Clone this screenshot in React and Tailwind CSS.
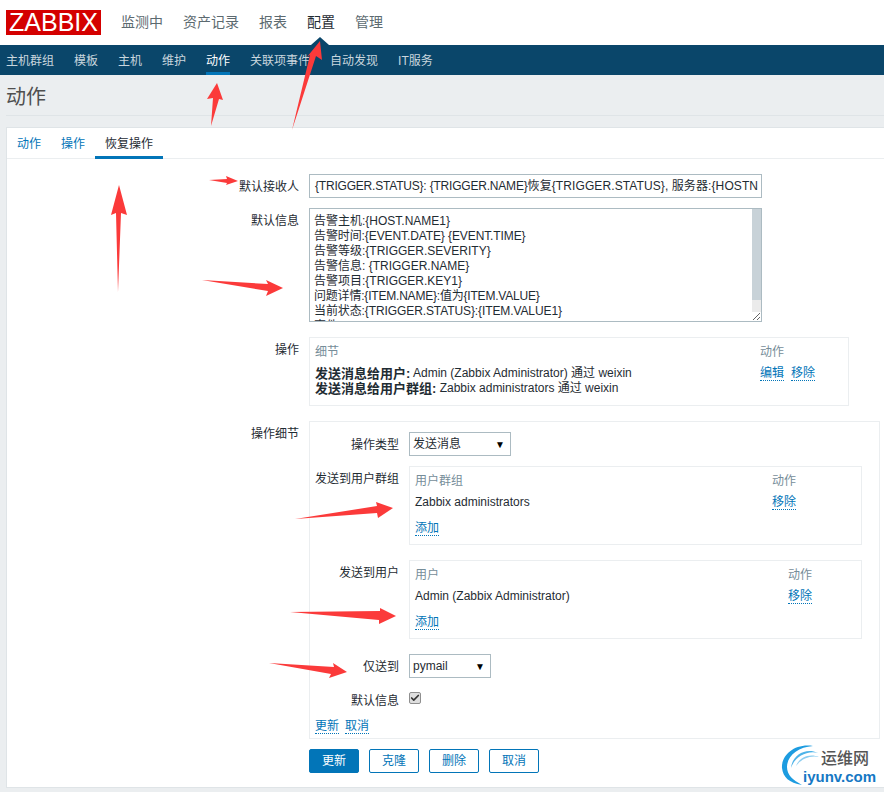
import { Check } from "lucide-react"

function Link({ children }) {
  return <a className="text-[#0275b8] border-b border-dotted border-[#0275b8] leading-[14px]">{children}</a>
}

function Row({ label, children, className = "" }) {
  return (
    <div className={`flex gap-[10px] ${className}`}>
      <div className="w-[292px] text-right pt-[6px] leading-[14px]">{label}</div>
      {children}
    </div>
  )
}

function SubRow({ label, children, className = "" }) {
  return (
    <div className={`flex gap-[10px] ${className}`}>
      <div className="w-[84px] shrink-0 text-right pt-[6px] leading-[14px]">{label}</div>
      {children}
    </div>
  )
}

function Select({ value, width }) {
  return (
    <div className={`${width} h-[24px] border border-[#acbbc2] bg-white flex items-center justify-between pl-[3px] pr-[5px]`}>
      <span>{value}</span>
      <span className="text-[10px] text-black">▼</span>
    </div>
  )
}

function ListBox({ head, name, colWidth, className = "" }) {
  return (
    <div className={`w-[453px] h-[79px] border border-[#ebeef0] px-[5px] pt-[7px] ${className}`}>
      <div className="flex text-[#768d99] leading-[14px]">
        <div className={colWidth}>{head}</div>
        <div>动作</div>
      </div>
      <div className="flex leading-[14px] mt-[7px]">
        <div className={colWidth}>{name}</div>
        <div><Link>移除</Link></div>
      </div>
      <div className="leading-[14px] mt-[12px]"><Link>添加</Link></div>
    </div>
  )
}

function Btn({ children, primary }) {
  return (
    <button
      className={
        primary
          ? "w-[50px] h-[24px] rounded-[2px] bg-[#0275b8] border border-[#0275b8] text-white"
          : "w-[50px] h-[24px] rounded-[2px] bg-white border border-[#0275b8] text-[#0275b8]"
      }
    >
      {children}
    </button>
  )
}

const lines = [
  { text: "告警主机:{HOST.NAME1}", cls: "" },
  { text: "告警时间:{EVENT.DATE} {EVENT.TIME}", cls: "tracking-[-0.1px]" },
  { text: "告警等级:{TRIGGER.SEVERITY}", cls: "" },
  { text: "告警信息: {TRIGGER.NAME}", cls: "" },
  { text: "告警项目:{TRIGGER.KEY1}", cls: "" },
  { text: "问题详情:{ITEM.NAME}:值为{ITEM.VALUE}", cls: "tracking-[-0.2px]" },
  { text: "当前状态:{TRIGGER.STATUS}:{ITEM.VALUE1}", cls: "tracking-[-0.1px]" },
  { text: "事件ID:{EVENT.ID}", cls: "" },
]

export default function App() {
  return (
    <div className="relative w-[884px] h-[792px] overflow-hidden bg-[#ebeef0] text-[12px] text-[#1f2c33] font-['Liberation_Sans','Noto_Sans_CJK_SC',sans-serif]">
      {/* Top nav */}
      <div className="h-[45px] bg-white flex items-center">
        <div className="ml-[6px] w-[95px] h-[25px] bg-[#d40000] text-white text-[25px] leading-[25px] text-center">ZABBIX</div>
        <div className="ml-[20px] flex gap-[20px] text-[14px] text-[#5c6a70]">
          <span>监测中</span>
          <span>资产记录</span>
          <span>报表</span>
          <span className="text-[#1f2c33]">配置</span>
          <span>管理</span>
        </div>
      </div>

      {/* Sub nav */}
      <div className="h-[30px] bg-[#0a466a] flex gap-[20px] pl-[6px] text-[#c9d6de]">
        <span className="leading-[32px]">主机群组</span>
        <span className="leading-[32px]">模板</span>
        <span className="leading-[32px]">主机</span>
        <span className="leading-[32px]">维护</span>
        <span className="leading-[32px] text-white border-b-[3px] border-[#0275b8] h-[30px]">动作</span>
        <span className="leading-[32px]">关联项事件</span>
        <span className="leading-[32px]">自动发现</span>
        <span className="leading-[32px]">IT服务</span>
      </div>

      {/* Title */}
      <div className="ml-[6px] h-[41px] border-b border-[#dfe4e7] text-[20px] leading-[44px] text-[#4f4f4f]">动作</div>

      {/* Panel */}
      <div className="mt-[11px] ml-[6px] bg-white border border-r-0 border-[#dfe4e7] h-[661px]">
        <div className="flex h-[31px] border-b border-[#ebeef0] text-[#0275b8]">
          <span className="px-[10px] leading-[32px]">动作</span>
          <span className="px-[10px] leading-[32px]">操作</span>
          <span className="px-[10px] leading-[32px] h-[31px] text-[#1f2c33] border-b-[3px] border-[#0275b8]">恢复操作</span>
        </div>

        <div className="pt-[15px]">
          <Row label="默认接收人">
            <div className="w-[453px] h-[24px] border border-[#acbbc2] px-[5px] leading-[23px] overflow-hidden whitespace-nowrap">
              <span className="tracking-[-0.2px]">{"{TRIGGER.STATUS}: {TRIGGER.NAME}"}</span>
              <span className="tracking-[0.1px]">{"恢复{TRIGGER.STATUS}, 服务器:{HOSTN"}</span>
            </div>
          </Row>

          <Row label="默认信息" className="mt-[10px]">
            <div className="w-[453px] h-[114px] border border-[#acbbc2] flex overflow-hidden">
              <div className="flex-1 pl-[4px] pt-[5px] leading-[15px] whitespace-nowrap overflow-hidden">
                {lines.map((l) => <div key={l.text} className={l.cls}>{l.text}</div>)}
              </div>
              <div className="w-[9px] flex flex-col">
                <div className="h-[91px] bg-[#c8d2d8]" />
                <div className="flex-1 bg-[#ebebeb]" />
                <svg className="block" width="9" height="9" viewBox="0 0 9 9">
                  <path d="M1 8 L8 1 M5 8 L8 5" stroke="#666" strokeWidth="1" />
                </svg>
              </div>
            </div>
          </Row>

          <Row label="操作" className="mt-[15px]">
            <div className="w-[540px] h-[69px] border border-[#ebeef0] px-[5px] pt-[7px]">
              <div className="flex text-[#768d99] leading-[14px]">
                <div className="w-[445px]">细节</div>
                <div>动作</div>
              </div>
              <div className="flex mt-[7px]">
                <div className="w-[445px]">
                  <div className="h-[15px] flex items-center whitespace-pre">
                    <b className="text-[13px] leading-[15px]">发送消息给用户:</b>
                    <span className="leading-[15px]"> Admin (Zabbix Administrator) 通过 weixin</span>
                  </div>
                  <div className="h-[15px] flex items-center whitespace-pre">
                    <b className="text-[13px] leading-[15px]">发送消息给用户群组:</b>
                    <span className="leading-[15px]"> Zabbix administrators 通过 weixin</span>
                  </div>
                </div>
                <div className="flex gap-[7px] items-start leading-[14px]">
                  <Link>编辑</Link>
                  <Link>移除</Link>
                </div>
              </div>
            </div>
          </Row>

          <Row label="操作细节" className="mt-[15px]">
            <div className="w-[571px] h-[318px] border border-[#ebeef0] pl-[5px] pt-[10px]">
              <SubRow label="操作类型">
                <Select value="发送消息" width="w-[102px]" />
              </SubRow>
              <SubRow label="发送到用户群组" className="mt-[10px]">
                <ListBox head="用户群组" name="Zabbix administrators" colWidth="w-[357px]" />
              </SubRow>
              <SubRow label="发送到用户" className="mt-[15px]">
                <ListBox head="用户" name="Admin (Zabbix Administrator)" colWidth="w-[373px]" />
              </SubRow>
              <SubRow label="仅送到" className="mt-[15px]">
                <Select value="pymail" width="w-[82px]" />
              </SubRow>
              <SubRow label="默认信息" className="mt-[10px]">
                <div className="pt-[4px]">
                  <span className="flex items-center justify-center w-[12px] h-[12px] rounded-[2px] border border-[#8f8f8f] bg-[#dedede]">
                    <Check size={10} strokeWidth={4} className="text-[#333]" />
                  </span>
                </div>
              </SubRow>
              <div className="mt-[11px] flex gap-[6px] leading-[14px]">
                <Link>更新</Link>
                <Link>取消</Link>
              </div>
            </div>
          </Row>

          <div className="mt-[10px] ml-[302px] flex gap-[10px]">
            <Btn primary>更新</Btn>
            <Btn>克隆</Btn>
            <Btn>删除</Btn>
            <Btn>取消</Btn>
          </div>
        </div>
      </div>

      {/* Red arrows drawn on the screenshot, plus the nav caret */}
      <svg className="absolute inset-0 pointer-events-none" width="884" height="792" viewBox="0 0 884 792">
        <path d="M311 45 L320 37 L329 45 Z" fill="#0a466a" />
        <g fill="#fb3a3a">
          <polygon points="292,130 310,55 307,57 320,41 322,60 316,56" />
          <polygon points="211,126 213,98 207,99 217,83 223,100 219,99" />
          <polygon points="209,180 227,179 226,176 238,181 226,185 227,183" />
          <polygon points="119,185 127,215 121,213 118,292 116,213 111,215" />
          <polygon points="202,280 268,284 266,280 283,288 266,296 268,291" />
          <polygon points="295,519 377,506 376,502 393,508 378,518 377,513" />
          <polygon points="290,612 380,611 380,608 396,616 379,624 379,620" />
          <polygon points="269,663 334,667 333,663 347,672 329,678 331,674" />
        </g>
      </svg>

      {/* Watermark */}
      <svg className="absolute left-[780px] top-[744px]" width="44" height="44" viewBox="0 0 44 44">
        <path d="M33 2 C14 -1 1 12 2 24 C3 33 9 39 22 41 C13 36 7 31 7 23 C7 12 18 3 33 2 Z" fill="#1d9ce0" />
        <path d="M38 9 C26 3 12 11 11 24 C14 14 26 6 38 9 Z" fill="#4db3e8" />
        <path d="M39 13 C30 9 19 13 16 22 C21 15 30 11 39 13 Z" fill="#8ccdf0" />
      </svg>
      <span className="absolute left-[821px] top-[750px] text-[16px] leading-[18px] font-medium text-[#555]">运维网</span>
      <span className="absolute left-[803px] top-[768px] text-[15px] leading-[18px] font-bold text-[#1578c4]">iyunv.com</span>
    </div>
  )
}
